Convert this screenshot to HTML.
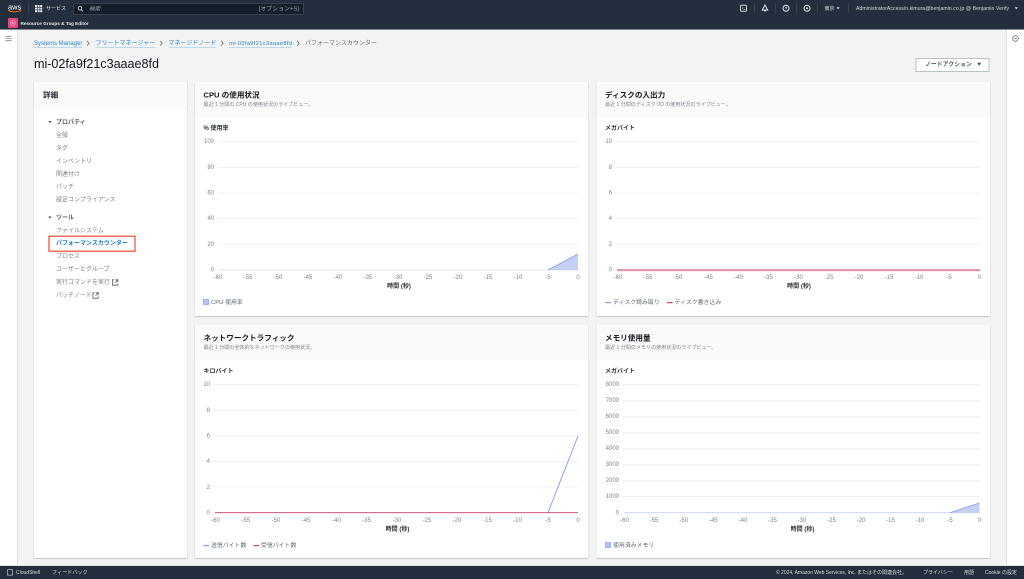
<!DOCTYPE html>
<html lang="ja"><head><meta charset="utf-8"><title>パフォーマンスカウンター</title>
<style>
html,body{margin:0;padding:0;width:1024px;height:579px;overflow:hidden;background:#f2f3f3}
svg{display:block;position:absolute;left:0;top:0;filter:blur(.22px)}
text{font-family:"Liberation Sans","Noto Sans CJK JP",sans-serif;font-size:6px;fill:#545b64;dominant-baseline:central;transform:translateY(1.2px)}
.w{fill:#e6e9ea}.n{fill:#d5dbdb}
.nav{fill:#7b838a;font-size:6px}
.l{fill:#2b86c5;font-size:6px}
.t{font-size:7.6px;font-weight:700;fill:#16191f}
.s{font-size:5.05px;fill:#7b838a}
.u{font-size:6px;font-weight:700;fill:#2a2f36}
.y{text-anchor:end;font-size:6px;fill:#7b838a}
.x{text-anchor:middle;font-size:6px;fill:#7b838a}
.a{text-anchor:middle;font-size:6px;font-weight:700;fill:#2a2f36}
.g{stroke:#eaeded;stroke-width:.8}
.lg{font-size:5.9px;fill:#5f666e}
</style></head><body>
<svg width="1024" height="579" viewBox="0 0 1024 579" xmlns="http://www.w3.org/2000/svg">
<defs><filter id="sh" x="-3%" y="-3%" width="106%" height="106%"><feDropShadow dx="0" dy=".7" stdDeviation=".6" flood-color="#000" flood-opacity=".28"/></filter></defs>
<rect width="1024" height="579" fill="#f2f3f3"/>
<!-- side rails -->
<rect x="0" y="29" width="17" height="537" fill="#fff"/><rect x="17" y="29" width="1" height="537" fill="#dfe3e4"/>
<rect x="1007" y="29" width="17" height="537" fill="#fff"/><rect x="1006" y="29" width="1" height="537" fill="#dfe3e4"/>
<!-- top nav -->
<rect width="1024" height="29" fill="#232f3e"/><rect y="29" width="1024" height=".8" fill="#687078"/>
<text x="8" y="5.6" style="font-size:7.4px;font-weight:400;fill:#fff">aws</text>
<path d="M8 10.5q6 2.6 12.5.2" fill="none" stroke="#ec7211" stroke-width="1"/><path d="M19.2 9.8l1.8.3-.9 1.4" fill="none" stroke="#ec7211" stroke-width=".6"/>
<path d="M28.5 3v10M754.5 3v10M775.5 3v10M796.5 3v10M817.5 3v10M848.5 3v10" stroke="#414d5c" stroke-width=".6"/>
<g fill="#eaeded"><rect x="35" y="5" width="2" height="2"/><rect x="37.6" y="5" width="2" height="2"/><rect x="40.2" y="5" width="2" height="2"/><rect x="35" y="7.6" width="2" height="2"/><rect x="37.6" y="7.6" width="2" height="2"/><rect x="40.2" y="7.6" width="2" height="2"/><rect x="35" y="10.2" width="2" height="2"/><rect x="37.6" y="10.2" width="2" height="2"/><rect x="40.2" y="10.2" width="2" height="2"/></g>
<text x="46" y="8" class="w" style="font-size:5px">サービス</text>
<rect x="73.5" y="3.5" width="230" height="11" rx="1" fill="#161e2d" stroke="#545b64" stroke-width=".6"/>
<circle cx="80" cy="8.3" r="1.8" fill="none" stroke="#d5dbdb" stroke-width=".8"/><path d="M81.3 9.7l1.6 1.6" stroke="#d5dbdb" stroke-width=".8"/>
<text x="89" y="8.2" style="font-size:5.6px;font-style:italic;fill:#95a5a6">検索</text>
<text x="299" y="8.2" style="font-size:5.9px;fill:#95a5a6;text-anchor:end">[オプション+S]</text>
<rect x="740.5" y="5.2" width="6" height="6" rx=".6" fill="none" stroke="#eaeded" stroke-width=".8"/><path d="M742 6.8l1.2 1.2-1.2 1.2M743.6 9.6h1.6" fill="none" stroke="#eaeded" stroke-width=".5"/>
<path d="M765 5l1.6 3 1.2 2h-5.6l1.2-2zM764.2 11h1.6" fill="none" stroke="#eaeded" stroke-width=".9"/>
<circle cx="786" cy="8.3" r="3" fill="none" stroke="#eaeded" stroke-width="1"/><path d="M785.2 7.4q.8-1 1.6 0l-.8 1.2v.6" fill="none" stroke="#eaeded" stroke-width=".6"/>
<circle cx="807" cy="8.3" r="3" fill="none" stroke="#eaeded" stroke-width="1"/><circle cx="807" cy="8.3" r="1" fill="#eaeded"/>
<text x="824.5" y="7.6" class="n" style="font-size:5px">東京</text><path d="M836.5 7.3h3.2l-1.6 2.1z" fill="#d5dbdb"/>
<text x="856" y="7.6" class="n" style="font-size:5.1px" textLength="153">AdministratorAccess/n.kimura@benjamin.co.jp @ Benjamin Verify</text><path d="M1014.7 7.3h3.2l-1.6 2.1z" fill="#d5dbdb"/>
<rect x="8" y="18" width="10" height="10" rx="1" fill="#e7447f"/><circle cx="13" cy="23" r="2.6" fill="none" stroke="#f8c6de" stroke-width=".9" stroke-dasharray="1 .6"/><circle cx="13" cy="23" r="1" fill="#f8c6de"/>
<text x="20.5" y="22.5" style="font-size:4.7px;font-weight:700;fill:#e6e9ea">Resource Groups &amp; Tag Editor</text>
<!-- footer -->
<rect y="566" width="1024" height="13" fill="#232f3e"/><rect y="565" width="1024" height="1" fill="#dfe3e4"/>
<rect x="7.5" y="569.7" width="5" height="5.4" fill="none" stroke="#d5dbdb" stroke-width=".6"/>
<text x="16" y="571.6" class="n" style="font-size:5px">CloudShell</text>
<text x="52" y="571.6" class="n" style="font-size:5.1px">フィードバック</text>
<text x="776" y="571.6" class="n" style="font-size:5px" textLength="131">© 2024, Amazon Web Services, Inc. またはその関連会社。</text>
<text x="923" y="571.6" class="n" style="font-size:5px">プライバシー</text>
<text x="964" y="571.6" class="n" style="font-size:5px">用語</text>
<text x="985" y="571.6" class="n" style="font-size:5px">Cookie の設定</text>
<!-- rail icons -->
<path d="M5.5 36.3h6M5.5 38.5h6M5.5 40.7h6" stroke="#7b838a" stroke-width=".8"/>
<circle cx="1015.5" cy="38.5" r="2.8" fill="none" stroke="#687078" stroke-width=".8"/><path d="M1014 38.5h3" stroke="#687078" stroke-width=".7"/>
<!-- breadcrumb -->
<text x="34" y="42.7" class="l">Systems Manager</text><rect x="34" y="47" width="48" height=".5" fill="#8cbfe0"/>
<path d="M87 41l2.2 2.3L87 45.6" fill="none" stroke="#687078" stroke-width=".8"/>
<text x="95.5" y="42.7" class="l">フリートマネージャー</text><rect x="95.5" y="47" width="59.5" height=".5" fill="#8cbfe0"/>
<path d="M160 41l2.2 2.3L160 45.6" fill="none" stroke="#687078" stroke-width=".8"/>
<text x="168.5" y="42.7" class="l">マネージドノード</text><rect x="168.5" y="47" width="47.5" height=".5" fill="#8cbfe0"/>
<path d="M221 41l2.2 2.3L221 45.6" fill="none" stroke="#687078" stroke-width=".8"/>
<text x="229" y="42.7" class="l" style="font-size:5.8px" textLength="63">mi-02fa9f21c3aaae8fd</text><rect x="229" y="47" width="63" height=".5" fill="#8cbfe0"/>
<path d="M297 41l2.2 2.3L297 45.6" fill="none" stroke="#687078" stroke-width=".8"/>
<text x="305" y="42.7" style="font-size:6px;fill:#6a7178">パフォーマンスカウンター</text>
<text x="34" y="63" style="font-size:12.6px;fill:#16191f" textLength="125">mi-02fa9f21c3aaae8fd</text>
<rect x="916" y="58.5" width="73" height="13" fill="#fff" stroke="#aab7b8" stroke-width=".8"/>
<text x="925" y="64" style="font-size:5.9px;font-weight:700;fill:#545b64">ノードアクション</text>
<path d="M977 62.8h4.4l-2.2 3z" fill="#545b64"/>
<!-- left card -->
<rect x="34" y="82" width="153" height="476" fill="#fff" filter="url(#sh)"/>
<rect x="34" y="82" width="153" height="28" fill="#fafafa"/>
<text x="43" y="94" style="font-size:7.6px;font-weight:700;fill:#2a2f36">詳細</text>
<path d="M48.2 121h3.4l-1.7 2.2z" fill="#545b64"/>
<text x="56" y="121.7" style="font-size:6px;font-weight:700;fill:#545b64">プロパティ</text>
<text x="56" y="135" class="nav">全般</text>
<text x="56" y="147.8" class="nav">タグ</text>
<text x="56" y="160.8" class="nav">インベントリ</text>
<text x="56" y="173.6" class="nav">関連付け</text>
<text x="56" y="186.4" class="nav">パッチ</text>
<text x="56" y="199.3" class="nav">設定コンプライアンス</text>
<path d="M48.2 216.5h3.4l-1.7 2.2z" fill="#545b64"/>
<text x="56" y="217.1" style="font-size:6px;font-weight:700;fill:#545b64">ツール</text>
<text x="56" y="230.1" class="nav">ファイルシステム</text>
<rect x="49" y="236.2" width="86" height="15" fill="#fff" stroke="#e8492e" stroke-width="1.2"/>
<text x="56" y="242.8" style="font-size:6px;font-weight:700;fill:#1f80c2">パフォーマンスカウンター</text>
<text x="56" y="255.6" class="nav">プロセス</text>
<text x="56" y="268.6" class="nav">ユーザーとグループ</text>
<text x="56" y="281.6" class="nav">実行コマンドを実行</text>
<path d="M114 279.8h-1.6v5.4h5.4v-1.6M115.3 279.8h2.5v2.5M117.8 279.8l-2.8 2.8" fill="none" stroke="#545b64" stroke-width=".8"/>
<text x="56" y="294.6" class="nav">パッチノード</text>
<path d="M94.5 292.8h-1.6v5.4h5.4v-1.6M95.8 292.8h2.5v2.5M98.3 292.8l-2.8 2.8" fill="none" stroke="#545b64" stroke-width=".8"/>

<!-- CPU card -->
<rect x="195" y="82" width="393" height="234" fill="#fff" filter="url(#sh)"/><rect x="195" y="82" width="393" height="35" fill="#fafafa"/>
<text x="203.5" y="94" class="t">CPU の使用状況</text><text x="203.5" y="104" class="s">最近 1 分間の CPU の使用状況のライブビュー。</text>
<text x="203.5" y="128" class="u">% 使用率</text>
<path class="g" d="M218 141.7H578M218 167.3H578M218 193H578M218 218.5H578M218 244.3H578"/>
<text x="214" y="141" class="y">100</text><text x="214" y="166.6" class="y">80</text><text x="214" y="192.3" class="y">60</text><text x="214" y="217.9" class="y">40</text><text x="214" y="243.6" class="y">20</text><text x="214" y="269.3" class="y">0</text>
<path d="M218 270H578" stroke="#dfe3e6" stroke-width=".9"/>
<path d="M548 270L578 254V270Z" fill="#c5d0f5"/><path d="M548 270L578 254" stroke="#7f9bea" stroke-width=".8" fill="none"/>
<g><text x="218" y="277" class="x">-60</text><text x="248" y="277" class="x">-55</text><text x="278" y="277" class="x">-50</text><text x="308" y="277" class="x">-45</text><text x="338" y="277" class="x">-40</text><text x="368" y="277" class="x">-35</text><text x="398" y="277" class="x">-30</text><text x="428" y="277" class="x">-25</text><text x="458" y="277" class="x">-20</text><text x="488" y="277" class="x">-15</text><text x="518" y="277" class="x">-10</text><text x="548" y="277" class="x">-5</text><text x="578" y="277" class="x">0</text></g>
<text x="399" y="286" class="a">時間 (秒)</text>
<rect x="203.5" y="299.5" width="5" height="5" fill="#b4c4f3" stroke="#7f9bea" stroke-width=".7"/><text x="211" y="301.6" class="lg">CPU 使用率</text>

<!-- Disk card -->
<rect x="596.5" y="82" width="393.5" height="234" fill="#fff" filter="url(#sh)"/><rect x="596.5" y="82" width="393.5" height="35" fill="#fafafa"/>
<text x="605" y="94" class="t">ディスクの入出力</text><text x="605" y="104" class="s">最近 1 分間のディスク I/O の使用状況のライブビュー。</text>
<text x="605" y="128" class="u">メガバイト</text>
<path class="g" d="M615 141.7H980M615 167.3H980M615 193H980M615 218.5H980M615 244.3H980"/>
<text x="612" y="141" class="y">10</text><text x="612" y="166.6" class="y">8</text><text x="612" y="192.3" class="y">6</text><text x="612" y="217.9" class="y">4</text><text x="612" y="243.6" class="y">2</text><text x="612" y="269.3" class="y">0</text>
<path d="M617 270H980" stroke="#d13b68" stroke-width="1"/><path d="M617 271H980" stroke="#e9c2d0" stroke-width=".6"/>
<g><text x="618" y="277" class="x">-60</text><text x="648" y="277" class="x">-55</text><text x="678" y="277" class="x">-50</text><text x="708.5" y="277" class="x">-45</text><text x="738.5" y="277" class="x">-40</text><text x="768.5" y="277" class="x">-35</text><text x="798.5" y="277" class="x">-30</text><text x="829" y="277" class="x">-25</text><text x="859" y="277" class="x">-20</text><text x="889" y="277" class="x">-15</text><text x="919" y="277" class="x">-10</text><text x="949" y="277" class="x">-5</text><text x="979.5" y="277" class="x">0</text></g>
<text x="799" y="286" class="a">時間 (秒)</text>
<rect x="605.5" y="302" width="5.5" height="1.2" fill="#7f9bea"/><text x="613" y="301.6" class="lg">ディスク読み取り</text>
<rect x="667" y="302" width="5.5" height="1.2" fill="#d13b68"/><text x="674.5" y="301.6" class="lg">ディスク書き込み</text>

<!-- Network card -->
<rect x="195" y="324.5" width="393" height="233.5" fill="#fff" filter="url(#sh)"/><rect x="195" y="324.5" width="393" height="35.5" fill="#fafafa"/>
<text x="203.5" y="336.6" class="t">ネットワークトラフィック</text><text x="203.5" y="346.6" class="s">最近 1 分間の全体的なネットワークの使用状況。</text>
<text x="203.5" y="370.6" class="u">キロバイト</text>
<path class="g" d="M213 384.7H578M213 410.3H578M213 436H578M213 461.5H578M213 487H578"/>
<text x="210" y="384" class="y">10</text><text x="210" y="409.6" class="y">8</text><text x="210" y="435.3" class="y">6</text><text x="210" y="460.9" class="y">4</text><text x="210" y="486.6" class="y">2</text><text x="210" y="512.3" class="y">0</text>
<path d="M548 512.6L578 436" stroke="#7f9bea" stroke-width=".9" fill="none"/>
<path d="M215 512.7H578" stroke="#d13b68" stroke-width=".9"/>
<g><text x="215.5" y="520" class="x">-60</text><text x="245.7" y="520" class="x">-55</text><text x="276" y="520" class="x">-50</text><text x="306" y="520" class="x">-45</text><text x="336.5" y="520" class="x">-40</text><text x="366.5" y="520" class="x">-35</text><text x="397" y="520" class="x">-30</text><text x="427" y="520" class="x">-25</text><text x="457" y="520" class="x">-20</text><text x="487.5" y="520" class="x">-15</text><text x="517.5" y="520" class="x">-10</text><text x="548" y="520" class="x">-5</text><text x="578" y="520" class="x">0</text></g>
<text x="397.5" y="529" class="a">時間 (秒)</text>
<rect x="203.5" y="545" width="5.5" height="1.2" fill="#7f9bea"/><text x="211" y="544.6" class="lg">送信バイト数</text>
<rect x="253.5" y="545" width="5.5" height="1.2" fill="#d13b68"/><text x="261" y="544.6" class="lg">受信バイト数</text>

<!-- Memory card -->
<rect x="596.5" y="324.5" width="393.5" height="233.5" fill="#fff" filter="url(#sh)"/><rect x="596.5" y="324.5" width="393.5" height="35.5" fill="#fafafa"/>
<text x="605" y="336.6" class="t">メモリ使用量</text><text x="605" y="346.6" class="s">最近 1 分間のメモリの使用状況のライブビュー。</text>
<text x="605" y="370.6" class="u">メガバイト</text>
<path class="g" d="M622 384.7H980M622 400.8H980M622 416.8H980M622 432.8H980M622 448.8H980M622 464.8H980M622 480.8H980M622 496.6H980"/>
<text x="619" y="384" class="y">8000</text><text x="619" y="400" class="y">7000</text><text x="619" y="416" class="y">6000</text><text x="619" y="432" class="y">5000</text><text x="619" y="448" class="y">4000</text><text x="619" y="464" class="y">3000</text><text x="619" y="480" class="y">2000</text><text x="619" y="496" class="y">1000</text><text x="619" y="512.3" class="y">0</text>
<path d="M624 512.7H980" stroke="#c5d0f5" stroke-width=".9"/>
<path d="M950 512.7L979.5 503V512.7Z" fill="#c5d0f5"/><path d="M950 512.7L979.5 503" stroke="#7f9bea" stroke-width=".8" fill="none"/>
<g><text x="624.5" y="520" class="x">-60</text><text x="654" y="520" class="x">-55</text><text x="683.7" y="520" class="x">-50</text><text x="713.3" y="520" class="x">-45</text><text x="743" y="520" class="x">-40</text><text x="772.5" y="520" class="x">-35</text><text x="802" y="520" class="x">-30</text><text x="831.5" y="520" class="x">-25</text><text x="861" y="520" class="x">-20</text><text x="890.5" y="520" class="x">-15</text><text x="920" y="520" class="x">-10</text><text x="950" y="520" class="x">-5</text><text x="979.5" y="520" class="x">0</text></g>
<text x="802.5" y="529" class="a">時間 (秒)</text>
<rect x="605.5" y="542.5" width="5" height="5" fill="#b4c4f3" stroke="#7f9bea" stroke-width=".7"/><text x="613" y="544.6" class="lg">使用済みメモリ</text>
</svg>
</body></html>
